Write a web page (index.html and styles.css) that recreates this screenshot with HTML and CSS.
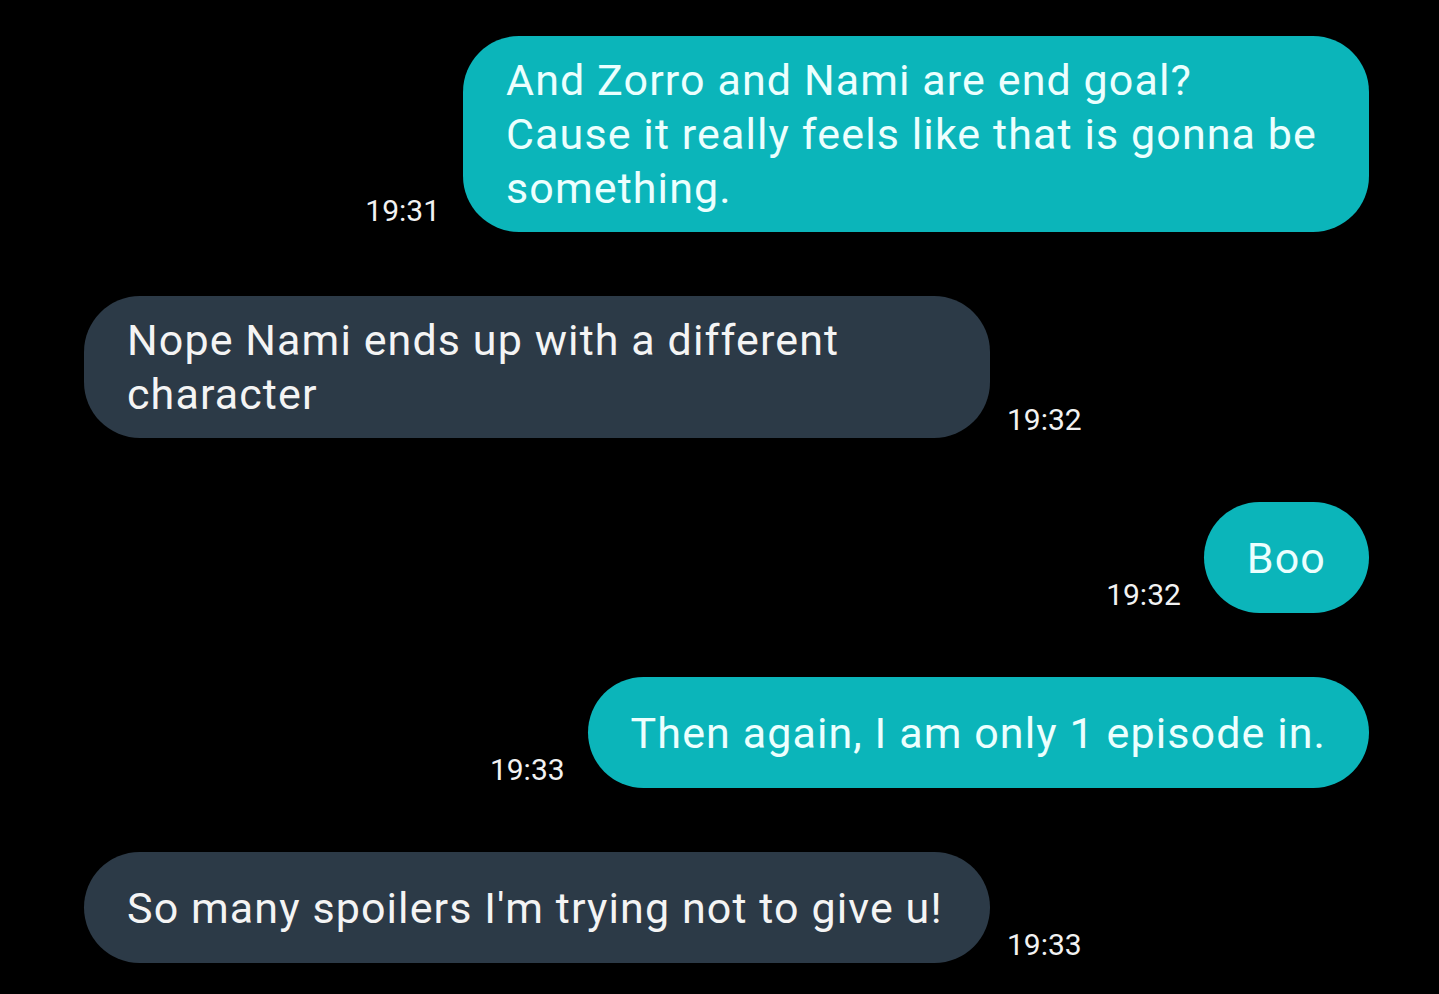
FILE: index.html
```html
<!DOCTYPE html>
<html lang="en">
<head>
<meta charset="utf-8">
<title>Messages</title>
<link rel="stylesheet" href="styles.css">
</head>
<body>
<main class="chat">
  <div class="row sent">
    <span class="time time-high">19:31</span>
    <div class="bubble bubble-sent bubble-wide"><p class="text">And Zorro and Nami are end goal?<br>Cause it really feels like that is gonna be<br>something.</p></div>
  </div>
  <div class="row recv">
    <div class="bubble bubble-recv bubble-wide"><p class="text">Nope Nami ends up with a different<br>character</p></div>
    <span class="time">19:32</span>
  </div>
  <div class="row sent">
    <span class="time">19:32</span>
    <div class="bubble bubble-sent"><p class="text">Boo</p></div>
  </div>
  <div class="row sent">
    <span class="time">19:33</span>
    <div class="bubble bubble-sent"><p class="text">Then again, I am only 1 episode in.</p></div>
  </div>
  <div class="row recv">
    <div class="bubble bubble-recv bubble-wide"><p class="text">So many spoilers I'm trying not to give u!</p></div>
    <span class="time">19:33</span>
  </div>
</main>
</body>
</html>
```
FILE: styles.css
```css
html, body {
  margin: 0;
  padding: 0;
  background: #000;
}

body {
  font-family: Roboto, "Noto Sans", sans-serif;
  width: 1439px;
  height: 994px;
  overflow: hidden;
}

.chat {
  display: flex;
  flex-direction: column;
  gap: 64px;
  padding: 36px 70px 0 84px;
}

.row {
  display: flex;
  align-items: flex-end;
}

.row.sent {
  justify-content: flex-end;
  gap: 23px;
}

.row.recv {
  justify-content: flex-start;
  gap: 17px;
}

.time {
  color: #f2f2f2;
  font-size: 30px;
  line-height: 30px;
  margin-bottom: 3px;
  white-space: nowrap;
}

.time-high {
  margin-bottom: 6px;
}

.bubble {
  box-sizing: border-box;
  min-height: 111px;
  max-width: 906px;
  padding: 17px 43px;
  border-radius: 56px;
  display: flex;
  align-items: center;
}

.bubble-wide {
  width: 906px;
}

.bubble-sent {
  background: #0bb5ba;
  color: #ecfffe;
}

.bubble-recv {
  background: #2c3a47;
  color: #f4f4f4;
}

.text {
  margin: 0;
  font-size: 43px;
  line-height: 54px;
  letter-spacing: 1.1px;
  white-space: nowrap;
}
```
